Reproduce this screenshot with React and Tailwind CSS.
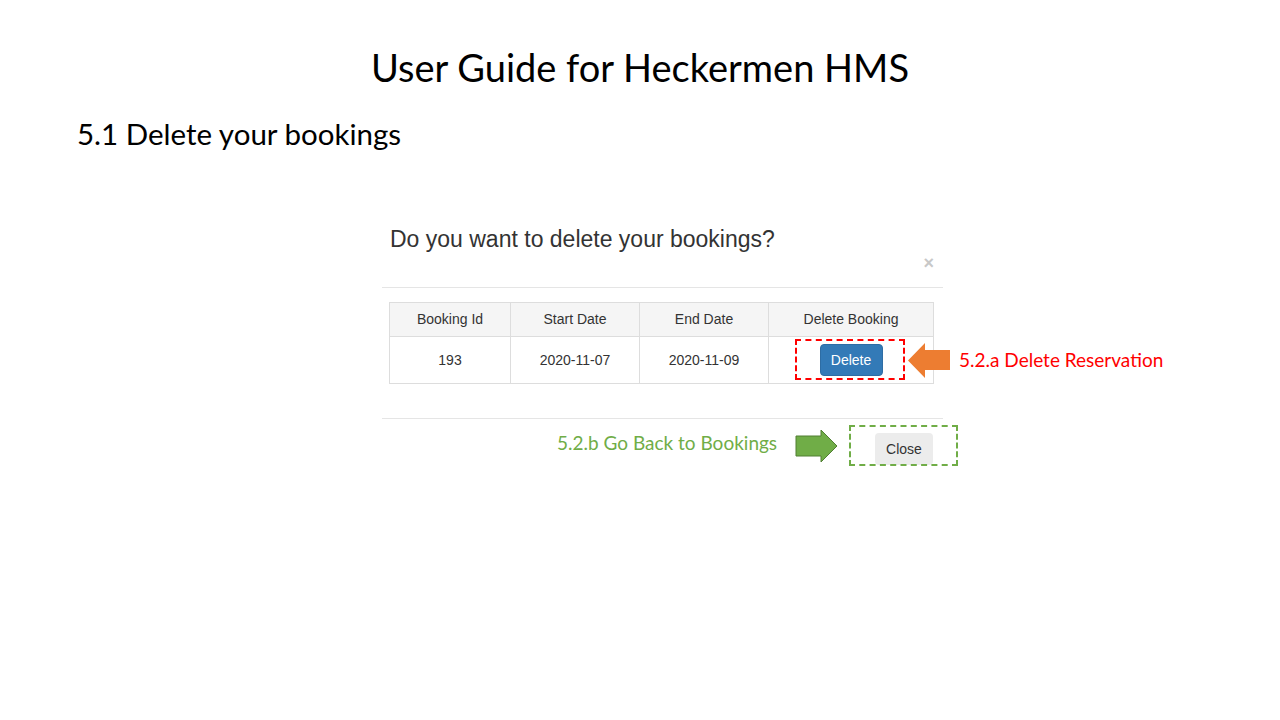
import React from "react";

const slideFont = { fontFamily: "Lato, 'Open Sans', sans-serif" };
const shotFont = { fontFamily: "'Liberation Sans', Arial, sans-serif" };

function LeftArrow() {
  return (
    <svg width="42" height="35" viewBox="0 0 42 35" className="absolute left-[908px] top-[343px]">
      <polygon points="0,17.5 17,0 17,7 42,7 42,27 17,27 17,35" fill="#ed7d31" />
    </svg>
  );
}

function RightArrow() {
  return (
    <svg width="43" height="34" viewBox="0 0 43 34" className="absolute left-[795px] top-[429px]">
      <polygon points="1,7 26,7 26,1 42,17 26,33 26,27 1,27" fill="#70ad47" stroke="#507e32" strokeWidth="1" />
    </svg>
  );
}

export default function App() {
  const rows = [{ id: "193", start: "2020-11-07", end: "2020-11-09" }];

  return (
    <div className="relative w-[1280px] h-[720px] bg-white overflow-hidden text-black">
      <h1 style={slideFont} className="pt-[42px] text-center text-[38px] leading-[50px]">
        User Guide for Heckermen HMS
      </h1>
      <h2 style={slideFont} className="mt-[24px] pl-[77px] text-[29.5px] leading-[36px]">
        5.1 Delete your bookings
      </h2>

      {/* the modal screenshot */}
      <div style={shotFont} className="ml-[382px] mt-[75px] w-[561px] text-[#333]">
        <div className="border-b border-[#e5e5e5] pb-[16px]">
          <div className="pl-[8px] text-[23px] leading-[24px]">Do you want to delete your bookings?</div>
          <div className="flex justify-end pr-[9px] pt-[4px] text-[18px] leading-[16px] font-bold text-[#c8c8c8]">×</div>
        </div>

        <div className="pl-[7px] pr-[10px] pt-[14px] pb-[34px] border-b border-[#e5e5e5]">
          <table className="w-[545px] border-collapse text-[14px] text-center">
            <thead>
              <tr className="bg-[#f5f5f5] h-[34px]">
                <th className="w-[121px] border border-[#dddddd] font-normal">Booking Id</th>
                <th className="w-[129px] border border-[#dddddd] font-normal">Start Date</th>
                <th className="w-[129px] border border-[#dddddd] font-normal">End Date</th>
                <th className="border border-[#dddddd] font-normal">Delete Booking</th>
              </tr>
            </thead>
            <tbody>
              {rows.map((r) => (
                <tr key={r.id} className="h-[47px]">
                  <td className="border border-[#dddddd]">{r.id}</td>
                  <td className="border border-[#dddddd]">{r.start}</td>
                  <td className="border border-[#dddddd]">{r.end}</td>
                  <td className="border border-[#dddddd]">
                    <button className="h-[32px] w-[63px] rounded-[4px] border border-[#2e6da4] bg-[#337ab7] text-white text-[14px]">
                      Delete
                    </button>
                  </td>
                </tr>
              ))}
            </tbody>
          </table>
        </div>

        <div className="flex justify-end pr-[10px] pt-[14px]">
          <button className="h-[32px] w-[58px] rounded-[4px] bg-[#ececec] text-[14px] text-[#333]">Close</button>
        </div>
      </div>

      {/* annotations */}
      <div className="absolute left-[795px] top-[339px] w-[110px] h-[41px] border-2 border-dashed border-[#ff0000]" />
      <LeftArrow />
      <div style={slideFont} className="absolute left-[959px] top-[347px] text-[19px] leading-[26px] text-[#ff0000]">
        5.2.a Delete Reservation
      </div>

      <div className="absolute left-[849px] top-[425px] w-[109px] h-[41px] border-2 border-dashed border-[#70ad47]" />
      <RightArrow />
      <div style={slideFont} className="absolute left-[557px] top-[430px] text-[19px] leading-[26px] text-[#70ad47]">
        5.2.b Go Back to Bookings
      </div>
    </div>
  );
}
